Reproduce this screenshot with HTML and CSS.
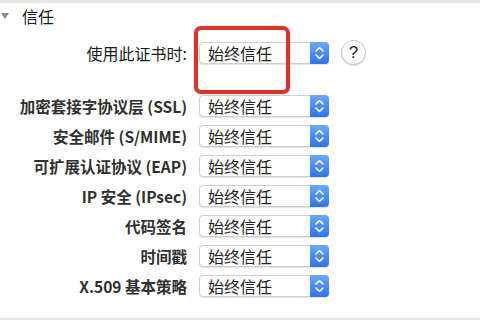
FILE: index.html
```html
<!DOCTYPE html>
<html lang="zh-CN">
<head>
  <meta charset="UTF-8">
  <meta name="viewport" content="width=device-width, initial-scale=1.0">
  <title>信任</title>
  <link rel="stylesheet" href="styles.css">
</head>
<body>
  <div class="topbar"></div>

  <div class="disclosure">
    <span class="triangle"></span>
    <span>信任</span>
  </div>

  <div class="trust-grid">
    <label class="first plain">使用此证书时:</label>
    <div class="popup first">
      <span class="value">始终信任</span>
      <span class="stepper">
        <svg width="19" height="22" viewBox="0 0 19 22"><path d="M6 9 L9.5 5.5 L13 9 M6 13 L9.5 16.5 L13 13" fill="none" stroke="#fff" stroke-width="1.6" stroke-linecap="round" stroke-linejoin="round"/></svg>
      </span>
      <span class="highlight"></span>
    </div>
    <button class="help first">?</button>

    <label>加密套接字协议层 (SSL)</label>
    <div class="popup"><span class="value">始终信任</span><span class="stepper"><svg width="19" height="22" viewBox="0 0 19 22"><path d="M6 9 L9.5 5.5 L13 9 M6 13 L9.5 16.5 L13 13" fill="none" stroke="#fff" stroke-width="1.6" stroke-linecap="round" stroke-linejoin="round"/></svg></span></div>
    <span></span>

    <label>安全邮件 (S/MIME)</label>
    <div class="popup"><span class="value">始终信任</span><span class="stepper"><svg width="19" height="22" viewBox="0 0 19 22"><path d="M6 9 L9.5 5.5 L13 9 M6 13 L9.5 16.5 L13 13" fill="none" stroke="#fff" stroke-width="1.6" stroke-linecap="round" stroke-linejoin="round"/></svg></span></div>
    <span></span>

    <label>可扩展认证协议 (EAP)</label>
    <div class="popup"><span class="value">始终信任</span><span class="stepper"><svg width="19" height="22" viewBox="0 0 19 22"><path d="M6 9 L9.5 5.5 L13 9 M6 13 L9.5 16.5 L13 13" fill="none" stroke="#fff" stroke-width="1.6" stroke-linecap="round" stroke-linejoin="round"/></svg></span></div>
    <span></span>

    <label>IP 安全 (IPsec)</label>
    <div class="popup"><span class="value">始终信任</span><span class="stepper"><svg width="19" height="22" viewBox="0 0 19 22"><path d="M6 9 L9.5 5.5 L13 9 M6 13 L9.5 16.5 L13 13" fill="none" stroke="#fff" stroke-width="1.6" stroke-linecap="round" stroke-linejoin="round"/></svg></span></div>
    <span></span>

    <label>代码签名</label>
    <div class="popup"><span class="value">始终信任</span><span class="stepper"><svg width="19" height="22" viewBox="0 0 19 22"><path d="M6 9 L9.5 5.5 L13 9 M6 13 L9.5 16.5 L13 13" fill="none" stroke="#fff" stroke-width="1.6" stroke-linecap="round" stroke-linejoin="round"/></svg></span></div>
    <span></span>

    <label>时间戳</label>
    <div class="popup"><span class="value">始终信任</span><span class="stepper"><svg width="19" height="22" viewBox="0 0 19 22"><path d="M6 9 L9.5 5.5 L13 9 M6 13 L9.5 16.5 L13 13" fill="none" stroke="#fff" stroke-width="1.6" stroke-linecap="round" stroke-linejoin="round"/></svg></span></div>
    <span></span>

    <label>X.509 基本策略</label>
    <div class="popup"><span class="value">始终信任</span><span class="stepper"><svg width="19" height="22" viewBox="0 0 19 22"><path d="M6 9 L9.5 5.5 L13 9 M6 13 L9.5 16.5 L13 13" fill="none" stroke="#fff" stroke-width="1.6" stroke-linecap="round" stroke-linejoin="round"/></svg></span></div>
    <span></span>
  </div>

  <div class="bottombar"></div>
</body>
</html>
```

FILE: styles.css
```css
body {
  margin: 0;
  width: 480px;
  height: 320px;
  overflow: hidden;
  background-color: #fff;
  color: #1c1c1c;
  font-family: "Noto Sans CJK SC", "Noto Sans", sans-serif;
  font-size: 16px;
}

.topbar {
  height: 3px;
  background-color: #e7e7ea;
}

.disclosure {
  display: flex;
  align-items: center;
  height: 26px;
  gap: 13px;
  padding-left: 1px;
  line-height: 26px;
}

.triangle {
  width: 0;
  height: 0;
  border-left: 4px solid transparent;
  border-right: 4px solid transparent;
  border-top: 6px solid #8c8c8c;
}

.trust-grid {
  display: grid;
  grid-template-columns: 187px 130px 26px;
  column-gap: 12px;
  row-gap: 8px;
  align-items: center;
  margin-top: 11px;
}

.trust-grid label {
  text-align: right;
  font-size: 15.5px;
  font-weight: 600;
  color: #303030;
  line-height: 22px;
  white-space: nowrap;
}

.trust-grid label.plain {
  font-size: 16px;
  font-weight: 400;
  color: #1c1c1c;
}

.trust-grid .first {
  margin-bottom: 22px;
}

.popup {
  position: relative;
  display: flex;
  align-items: center;
  height: 22px;
  box-sizing: border-box;
  border: 1px solid #cfcfcf;
  border-radius: 4px;
  background-color: #fff;
  box-shadow: 0 1px 1px rgba(0, 0, 0, 0.12);
}

.popup .value {
  flex: 1;
  padding-left: 8px;
  line-height: 20px;
  color: #222;
}

.stepper {
  display: flex;
  width: 19px;
  height: 22px;
  margin: -1px -1px -1px 0;
  border-radius: 0 4px 4px 0;
  background: linear-gradient(to bottom, #69a9fb, #2f73ea);
}

.highlight {
  position: absolute;
  left: -6px;
  top: -17px;
  width: 88px;
  height: 60px;
  border: 4px solid #d8342e;
  border-radius: 7px;
  box-shadow: 0 0 2px rgba(160, 30, 30, 0.4);
  pointer-events: none;
}

.help {
  width: 25px;
  height: 25px;
  padding: 0;
  border: 1px solid #c4c4c4;
  border-radius: 50%;
  background-color: #fff;
  box-shadow: 0 1px 1px rgba(0, 0, 0, 0.15);
  font-family: "Liberation Sans", sans-serif;
  font-size: 17px;
  color: #222;
  line-height: 23px;
}

.bottombar {
  height: 5px;
  margin-top: 21px;
  background-color: #e7e7ea;
}
```
